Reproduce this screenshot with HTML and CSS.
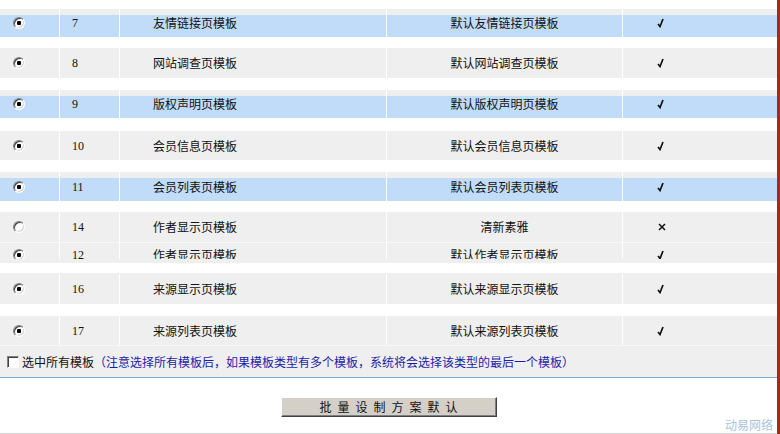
FILE: index.html
```html
<!DOCTYPE html>
<html>
<head>
    <meta charset="utf-8">
    <title>模板方案设置</title>
    <link rel="stylesheet" href="styles.css">
</head>
<body>
    <div class="page">
        <div class="list">
            <div class="row hot gap-9 h28">
                <div class="cell c-pick"><input type="radio" name="tpl" checked></div>
                <div class="cell c-id">7</div>
                <div class="cell c-name">友情链接页模板</div>
                <div class="cell c-default">默认友情链接页模板</div>
                <div class="cell c-state"><svg class="ok" viewBox="0 0 7 10"><polyline points="1,6 3,8.5 6,1"/></svg></div>
            </div>
            <div class="row gap-11 h30">
                <div class="cell c-pick"><input type="radio" name="tpl8" checked></div>
                <div class="cell c-id">8</div>
                <div class="cell c-name">网站调查页模板</div>
                <div class="cell c-default">默认网站调查页模板</div>
                <div class="cell c-state"><svg class="ok" viewBox="0 0 7 10"><polyline points="1,6 3,8.5 6,1"/></svg></div>
            </div>
            <div class="row hot gap-12 h28">
                <div class="cell c-pick"><input type="radio" name="tpl9" checked></div>
                <div class="cell c-id">9</div>
                <div class="cell c-name">版权声明页模板</div>
                <div class="cell c-default">默认版权声明页模板</div>
                <div class="cell c-state"><svg class="ok" viewBox="0 0 7 10"><polyline points="1,6 3,8.5 6,1"/></svg></div>
            </div>
            <div class="row gap-13 h29">
                <div class="cell c-pick"><input type="radio" name="tpl10" checked></div>
                <div class="cell c-id">10</div>
                <div class="cell c-name">会员信息页模板</div>
                <div class="cell c-default">默认会员信息页模板</div>
                <div class="cell c-state"><svg class="ok" viewBox="0 0 7 10"><polyline points="1,6 3,8.5 6,1"/></svg></div>
            </div>
            <div class="row hot gap-12 h29">
                <div class="cell c-pick"><input type="radio" name="tpl11" checked></div>
                <div class="cell c-id">11</div>
                <div class="cell c-name">会员列表页模板</div>
                <div class="cell c-default">默认会员列表页模板</div>
                <div class="cell c-state"><svg class="ok" viewBox="0 0 7 10"><polyline points="1,6 3,8.5 6,1"/></svg></div>
            </div>
            <div class="row gap-11 h30">
                <div class="cell c-pick"><input type="radio" name="tpl14"></div>
                <div class="cell c-id">14</div>
                <div class="cell c-name">作者显示页模板</div>
                <div class="cell c-default">清新素雅</div>
                <div class="cell c-state"><svg class="no" viewBox="0 0 8 8"><path d="M1 1 L7 7 M7 1 L1 7"/></svg></div>
            </div>
            <div class="row cut">
                <div class="cell c-pick"><input type="radio" name="tpl12" checked></div>
                <div class="cell c-id">12</div>
                <div class="cell c-name">作者显示页模板</div>
                <div class="cell c-default">默认作者显示页模板</div>
                <div class="cell c-state"><svg class="ok" viewBox="0 0 7 10"><polyline points="1,6 3,8.5 6,1"/></svg></div>
            </div>
            <div class="row gap-10 h31">
                <div class="cell c-pick"><input type="radio" name="tpl16" checked></div>
                <div class="cell c-id">16</div>
                <div class="cell c-name">来源显示页模板</div>
                <div class="cell c-default">默认来源显示页模板</div>
                <div class="cell c-state"><svg class="ok" viewBox="0 0 7 10"><polyline points="1,6 3,8.5 6,1"/></svg></div>
            </div>
            <div class="row gap-12 h29">
                <div class="cell c-pick"><input type="radio" name="tpl17" checked></div>
                <div class="cell c-id">17</div>
                <div class="cell c-name">来源列表页模板</div>
                <div class="cell c-default">默认来源列表页模板</div>
                <div class="cell c-state"><svg class="ok" viewBox="0 0 7 10"><polyline points="1,6 3,8.5 6,1"/></svg></div>
            </div>
            <div class="foot">
                <label><input type="checkbox" class="all">选中所有模板</label>
                <span class="note">（注意选择所有模板后，如果模板类型有多个模板，系统将会选择该类型的最后一个模板）</span>
            </div>
        </div>
        <div class="actions">
            <button class="btn">批量设制方案默认</button>
        </div>
        <div class="mark">动易网络</div>
    </div>
</body>
</html>
```

FILE: styles.css
```css
body {
    margin: 0;
    background: #fff;
    font-family: "Noto Sans CJK SC", "Noto Sans", sans-serif;
    font-size: 12px;
    color: #111;
}
.page {
    width: 777px;
    border-right: 3px solid #a42a1a;
}
.list {
    display: flex;
    flex-direction: column;
}
.row {
    display: grid;
    grid-template-columns: 59px 60px 267px 236px 1fr;
    background: #efefef;
    overflow: hidden;
}
.row.hot {
    background: linear-gradient(#efefef 0 6px, #c0dcf8 6px 100%);
}
.gap-9 { margin-top: 9px; }
.gap-10 { margin-top: 10px; }
.gap-11 { margin-top: 11px; }
.gap-12 { margin-top: 12px; }
.gap-13 { margin-top: 13px; }
.h28 { height: 28px; }
.h29 { height: 29px; }
.h30 { height: 30px; }
.h31 { height: 31px; }
/* half-drawn row: only the upper part of its text shows */
.row.cut {
    height: 20px;
    border-top: 1px solid #f8f8f8;
    align-items: start;
}
.row.cut .cell {
    height: 16px;
    overflow: hidden;
    align-items: flex-start;
    line-height: 24px;
}
.row.cut input[type="radio"] {
    margin-top: 6px;
}
.row.cut .ok {
    margin-top: 7px;
}
.cell {
    display: flex;
    align-items: center;
    border-left: 1px solid #fff;
    line-height: 16px;
}
.cell.c-pick {
    border-left: none;
}
.c-id {
    padding-left: 12px;
    font-family: "Liberation Serif", serif;
    font-size: 12px;
}
.c-name {
    padding-left: 33px;
}
.c-default {
    justify-content: center;
}
.c-state {
    padding-left: 34px;
}
input[type="radio"] {
    appearance: none;
    -webkit-appearance: none;
    flex-shrink: 0;
    width: 12px;
    height: 12px;
    margin: 0 0 0 13px;
    border-radius: 50%;
    border: 1px solid;
    border-color: #808080 #fff #fff #808080;
    box-shadow: inset 1px 1px 0 #404040, inset -1px -1px 0 #d4d0c8;
    background: #fff;
    box-sizing: border-box;
}
input[type="radio"]:checked {
    background: radial-gradient(circle, #000 0 2px, #fff 2.5px);
}
.ok {
    flex-shrink: 0;
    width: 7px;
    height: 10px;
    fill: none;
    stroke: #111;
    stroke-width: 1.7;
}
.no {
    width: 8px;
    height: 8px;
    margin-left: 1px;
    fill: none;
    stroke: #111;
    stroke-width: 1.5;
}
.foot {
    display: flex;
    align-items: center;
    height: 31px;
    padding-left: 7px;
    background: #efefef;
    border-top: 1px solid #f8f8f8;
    border-bottom: 1px solid #7ea7d2;
}
.foot label {
    display: flex;
    align-items: center;
}
input[type="checkbox"] {
    appearance: none;
    -webkit-appearance: none;
    width: 12px;
    height: 12px;
    margin: 0 3px 0 0;
    border: 1px solid;
    border-color: #808080 #fff #fff #808080;
    box-shadow: inset 1px 1px 0 #404040;
    background: #fff;
    box-sizing: border-box;
}
.note {
    color: #1c1ca8;
}
.actions {
    display: flex;
    justify-content: center;
    padding-top: 19px;
}
.btn {
    width: 216px;
    height: 20px;
    padding: 0;
    background: #d4d0c8;
    border: 1px solid;
    border-color: #fff #404040 #404040 #fff;
    box-shadow: inset -1px -1px 0 #808080;
    font-family: "Noto Sans CJK SC", sans-serif;
    font-size: 12px;
    letter-spacing: 6px;
    text-indent: 6px;
    color: #111;
    line-height: 16px;
}
.mark {
    height: 16px;
    text-align: right;
    padding-right: 4px;
    color: #a9c3dc;
    font-size: 12px;
    line-height: 16px;
    border-bottom: 1px solid #d6d6d6;
}
```
